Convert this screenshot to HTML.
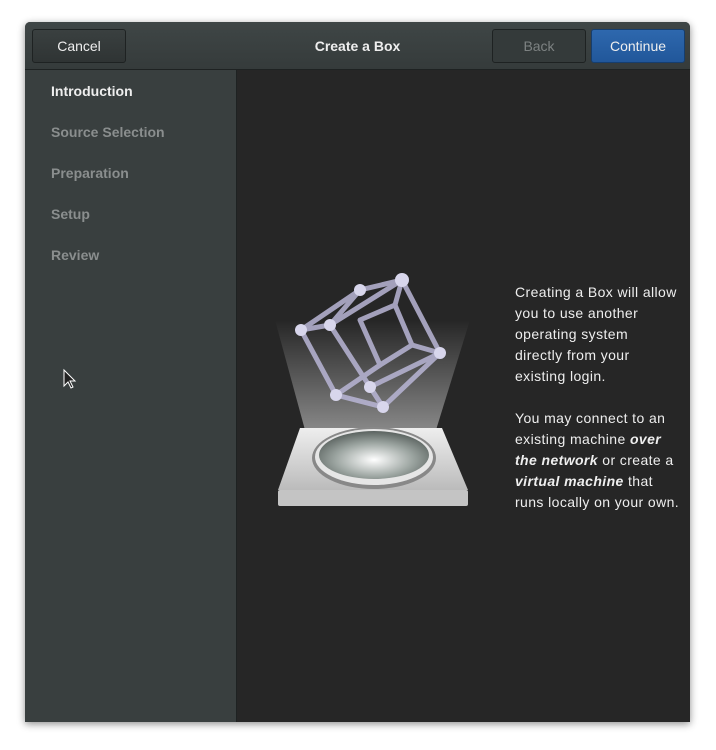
<!DOCTYPE html><html><head><style>
body{margin:0;width:716px;height:750px;background:#fff;font-family:"Liberation Sans",sans-serif;position:relative;overflow:hidden}
.win{position:absolute;left:25px;top:22px;width:665px;height:700px;background:#262626;border-radius:5px 5px 0 0;box-shadow:0 2px 8px rgba(0,0,0,.45);overflow:hidden}
.hdr{position:absolute;left:0;top:0;width:665px;height:47px;background:linear-gradient(#3f4646,#353b3b);border-bottom:1px solid #1e2222}
.btn{position:absolute;top:7px;height:32px;border:1px solid #1e2222;border-radius:3px;background:linear-gradient(#3a4040,#2f3434);color:#eee;font-size:14px;line-height:32px;text-align:center}
.title{position:absolute;left:0;right:0;top:16px;text-align:center;color:#eee;font-weight:bold;font-size:14px}
.side{position:absolute;left:0;top:48px;width:211px;height:652px;background:#393f3f;border-right:1px solid #1e2222}
.side div{position:absolute;left:26px;font-weight:bold;font-size:14px;color:#8a8e8e}
.txt{position:absolute;left:490px;top:260px;color:#eee;font-size:14px;letter-spacing:.4px;line-height:21px;white-space:nowrap}
</style></head><body>
<div class="win">
<div class="hdr">
<div class="btn" style="left:7px;width:92px">Cancel</div>
<div class="title">Create a Box</div>
<div class="btn" style="left:467px;width:92px;color:#7d8282;background:#343a3a">Back</div>
<div class="btn" style="left:566px;width:92px;background:linear-gradient(#2e68ae,#21579a);border-color:#163e6e">Continue</div>
</div>
<div class="side">
<div style="top:13px;color:#eee">Introduction</div>
<div style="top:54px">Source Selection</div>
<div style="top:95px">Preparation</div>
<div style="top:136px">Setup</div>
<div style="top:177px">Review</div>
</div>
<div class="txt">Creating a Box will allow<br>you to use another<br>operating system<br>directly from your<br>existing login.<br><br>You may connect to an<br>existing machine <b><i>over<br>the network</i></b> or create a<br><b><i>virtual machine</i></b> that<br>runs locally on your own.</div>
</div>
<svg style="position:absolute;left:0;top:0" width="716" height="750">
<defs><linearGradient id="b" x1="0" y1="1" x2="0" y2="0"><stop offset="0" stop-color="#fff" stop-opacity=".45"/><stop offset="1" stop-color="#fff" stop-opacity="0"/></linearGradient>
<radialGradient id="d" cx=".5" cy=".6" r=".6"><stop offset="0" stop-color="#fff"/><stop offset=".6" stop-color="#9aa39f"/><stop offset="1" stop-color="#5a625f"/></radialGradient>
<linearGradient id="p" x1="0" y1="0" x2="0" y2="1"><stop offset="0" stop-color="#eee"/><stop offset="1" stop-color="#bbb"/></linearGradient></defs>
<polygon points="305,430 436,430 470,320 275,320" fill="url(#b)"/>
<polygon points="300,428 442,428 468,490 278,490" fill="url(#p)"/>
<rect x="278" y="490" width="190" height="16" rx="2" fill="#c4c4c4"/>
<ellipse cx="374" cy="458" rx="62" ry="31" fill="#888"/>
<ellipse cx="374" cy="457" rx="59" ry="28" fill="#e6e6e6"/>
<ellipse cx="374" cy="455" rx="55" ry="24" fill="url(#d)"/>
<g stroke="#b9b6d6" stroke-width="5" fill="none" stroke-linecap="round" opacity=".85">
<polyline points="301,330 360,290 402,280 440,353 383,407 336,395 301,330"/>
<line x1="360" y1="290" x2="330" y2="325"/><line x1="301" y1="330" x2="330" y2="325"/><line x1="330" y1="325" x2="370" y2="387"/>
<line x1="330" y1="325" x2="402" y2="280"/><line x1="370" y1="387" x2="440" y2="353"/><line x1="370" y1="387" x2="383" y2="407"/>
<polyline points="360,320 395,305 412,345 380,365 360,320"/>
<line x1="402" y1="280" x2="395" y2="305"/><line x1="440" y1="353" x2="412" y2="345"/><line x1="336" y1="395" x2="380" y2="365"/>
</g>
<g fill="#d8d6ec"><circle cx="301" cy="330" r="6"/><circle cx="360" cy="290" r="6"/><circle cx="402" cy="280" r="7"/><circle cx="440" cy="353" r="6"/><circle cx="383" cy="407" r="6"/><circle cx="336" cy="395" r="6"/><circle cx="330" cy="325" r="6"/><circle cx="370" cy="387" r="6"/></g>
<path d="M64 370 v16 l4-4 3 6 2-1-3-6 h5z" fill="#222" stroke="#fff" stroke-width="1"/>
</svg>
</body></html>
